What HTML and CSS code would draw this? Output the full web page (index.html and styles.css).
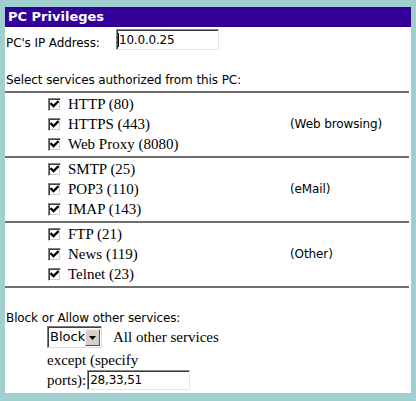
FILE: index.html
```html
<!DOCTYPE html>
<html>
<head>
<meta charset="utf-8">
<link rel="stylesheet" href="styles.css">
</head>
<body>
<div class="panel">
  <div class="title">PC Privileges</div>
  <div class="ip-row">
    <span class="label">PC's IP Address:</span>
    <span class="textbox ip"><span class="caret"></span>10.0.0.25</span>
  </div>
  <div class="select-label">Select services authorized from this PC:</div>

  <div class="group">
    <div class="items">
      <div class="item"><span class="cb"><svg viewBox="0 0 9 9" width="9" height="9"><path d="M1.2 3.8 L3.5 6.1 L7.8 1.8" fill="none" stroke="#000" stroke-width="2.2" stroke-linecap="square"/></svg></span><span class="svc">HTTP (80)</span></div>
      <div class="item"><span class="cb"><svg viewBox="0 0 9 9" width="9" height="9"><path d="M1.2 3.8 L3.5 6.1 L7.8 1.8" fill="none" stroke="#000" stroke-width="2.2" stroke-linecap="square"/></svg></span><span class="svc">HTTPS (443)</span></div>
      <div class="item"><span class="cb"><svg viewBox="0 0 9 9" width="9" height="9"><path d="M1.2 3.8 L3.5 6.1 L7.8 1.8" fill="none" stroke="#000" stroke-width="2.2" stroke-linecap="square"/></svg></span><span class="svc">Web Proxy (8080)</span></div>
    </div>
    <div class="desc">(Web browsing)</div>
  </div>

  <div class="group">
    <div class="items">
      <div class="item"><span class="cb"><svg viewBox="0 0 9 9" width="9" height="9"><path d="M1.2 3.8 L3.5 6.1 L7.8 1.8" fill="none" stroke="#000" stroke-width="2.2" stroke-linecap="square"/></svg></span><span class="svc">SMTP (25)</span></div>
      <div class="item"><span class="cb"><svg viewBox="0 0 9 9" width="9" height="9"><path d="M1.2 3.8 L3.5 6.1 L7.8 1.8" fill="none" stroke="#000" stroke-width="2.2" stroke-linecap="square"/></svg></span><span class="svc">POP3 (110)</span></div>
      <div class="item"><span class="cb"><svg viewBox="0 0 9 9" width="9" height="9"><path d="M1.2 3.8 L3.5 6.1 L7.8 1.8" fill="none" stroke="#000" stroke-width="2.2" stroke-linecap="square"/></svg></span><span class="svc">IMAP (143)</span></div>
    </div>
    <div class="desc">(eMail)</div>
  </div>

  <div class="group">
    <div class="items">
      <div class="item"><span class="cb"><svg viewBox="0 0 9 9" width="9" height="9"><path d="M1.2 3.8 L3.5 6.1 L7.8 1.8" fill="none" stroke="#000" stroke-width="2.2" stroke-linecap="square"/></svg></span><span class="svc">FTP (21)</span></div>
      <div class="item"><span class="cb"><svg viewBox="0 0 9 9" width="9" height="9"><path d="M1.2 3.8 L3.5 6.1 L7.8 1.8" fill="none" stroke="#000" stroke-width="2.2" stroke-linecap="square"/></svg></span><span class="svc">News (119)</span></div>
      <div class="item"><span class="cb"><svg viewBox="0 0 9 9" width="9" height="9"><path d="M1.2 3.8 L3.5 6.1 L7.8 1.8" fill="none" stroke="#000" stroke-width="2.2" stroke-linecap="square"/></svg></span><span class="svc">Telnet (23)</span></div>
    </div>
    <div class="desc">(Other)</div>
  </div>

  <div class="other-label">Block or Allow other services:</div>
  <div class="other">
    <div class="other-row">
      <span class="dropdown"><span class="dd-text">Block</span><span class="dd-btn"><svg viewBox="0 0 7 4" width="7" height="4"><path d="M0 0 H7 L3.5 4 Z" fill="#000"/></svg></span></span>
      <span class="svc all">All other services</span>
    </div>
    <div class="svc except">except (specify</div>
    <div class="ports-row">
      <span class="svc">ports):</span>
      <span class="textbox ports">28,33,51</span>
    </div>
  </div>
</div>
</body>
</html>
```
FILE: styles.css
```css
html, body {
  margin: 0;
  padding: 0;
}
body {
  background: #9fd0cf;
  width: 416px;
  height: 401px;
  overflow: hidden;
  font-family: "DejaVu Sans", Verdana, sans-serif;
  font-size: 12px;
  letter-spacing: -0.1px;
  color: #000;
}
.panel {
  margin: 7px 5px 0 5px;
  width: 406px;
  height: 386px;
  background: #fff;
  box-sizing: border-box;
}
.title {
  height: 20px;
  background: #330099;
  color: #fff;
  font-weight: bold;
  font-size: 13px;
  letter-spacing: 0;
  line-height: 20px;
  padding-left: 3px;
}
.ip-row {
  display: flex;
  align-items: flex-start;
  height: 23px;
}
.ip-row .label {
  padding-left: 1px;
  margin-top: 9px;
  line-height: 14px;
  width: 110px;
}
.textbox {
  display: inline-flex;
  align-items: center;
  box-sizing: border-box;
  border: 1px solid #8a8a8a;
  border-right-color: #e4e4ee;
  border-bottom-color: #e4e4ee;
  box-shadow: inset 1px 1px 0 #3a3a3a;
  font-family: "DejaVu Sans", Verdana, sans-serif;
  font-size: 12px;
  letter-spacing: -0.2px;
  background: #fff;
}
.textbox.ip {
  width: 103px;
  height: 21px;
  margin-top: 2px;
  padding-left: 1px;
}
.caret {
  display: inline-block;
  width: 1px;
  height: 14px;
  background: #000;
  margin-right: 0;
}
.select-label {
  padding: 23px 0 0 1px;
  height: 15px;
  line-height: 15px;
  margin-bottom: 3px;
}
.group {
  display: flex;
  border-top: 2px solid #6f6f6f;
  margin-right: 2px;
  padding: 1px 0 2px 0;
}
.items {
  display: flex;
  flex-direction: column;
  width: 285px;
  padding-left: 43px;
  box-sizing: border-box;
}
.item {
  display: flex;
  align-items: center;
  height: 20px;
}
.cb {
  display: inline-flex;
  align-items: center;
  justify-content: center;
  box-sizing: border-box;
  width: 13px;
  height: 13px;
  border: 1px solid;
  border-color: #808080 #ffffff #ffffff #808080;
  box-shadow: inset 1px 1px 0 #404040, inset -1px -1px 0 #d4d0c8;
  background: #fff;
  margin-right: 7px;
}
.svc {
  font-family: "Liberation Serif", "Times New Roman", serif;
  font-size: 15px;
  letter-spacing: 0;
}
.desc {
  align-self: center;
}
.other-label {
  border-top: 2px solid #6f6f6f;
  margin-right: 2px;
  padding: 23px 0 0 1px;
  height: 15px;
  line-height: 15px;
}
.other {
  padding-left: 42px;
}
.other-row {
  display: flex;
  align-items: center;
  height: 22px;
}
.dropdown {
  display: inline-flex;
  align-items: stretch;
  box-sizing: border-box;
  height: 22px;
  width: 55px;
  border: 1px solid #7a7a7a;
  border-right-color: #dcdcdc;
  border-bottom-color: #dcdcdc;
  box-shadow: inset 1px 1px 0 #404040;
  background: #fff;
  margin-right: 11px;
}
.dd-text {
  font-size: 13px;
  letter-spacing: 0;
  padding-left: 2px;
  line-height: 20px;
  flex: 1;
}
.dd-btn {
  display: inline-flex;
  align-items: center;
  justify-content: center;
  width: 16px;
  margin: 2px 1px 1px 0;
  background: #d4d0c8;
  border: 1px solid;
  border-color: #f4f4f4 #555 #555 #f4f4f4;
  box-sizing: border-box;
}
.except {
  margin-top: 2px;
  height: 20px;
  line-height: 20px;
}
.ports-row {
  display: flex;
  align-items: center;
  height: 20px;
}
.ports-row .svc {
  margin-right: 1px;
}
.textbox.ports {
  width: 103px;
  height: 20px;
  padding-left: 2px;
}
```
